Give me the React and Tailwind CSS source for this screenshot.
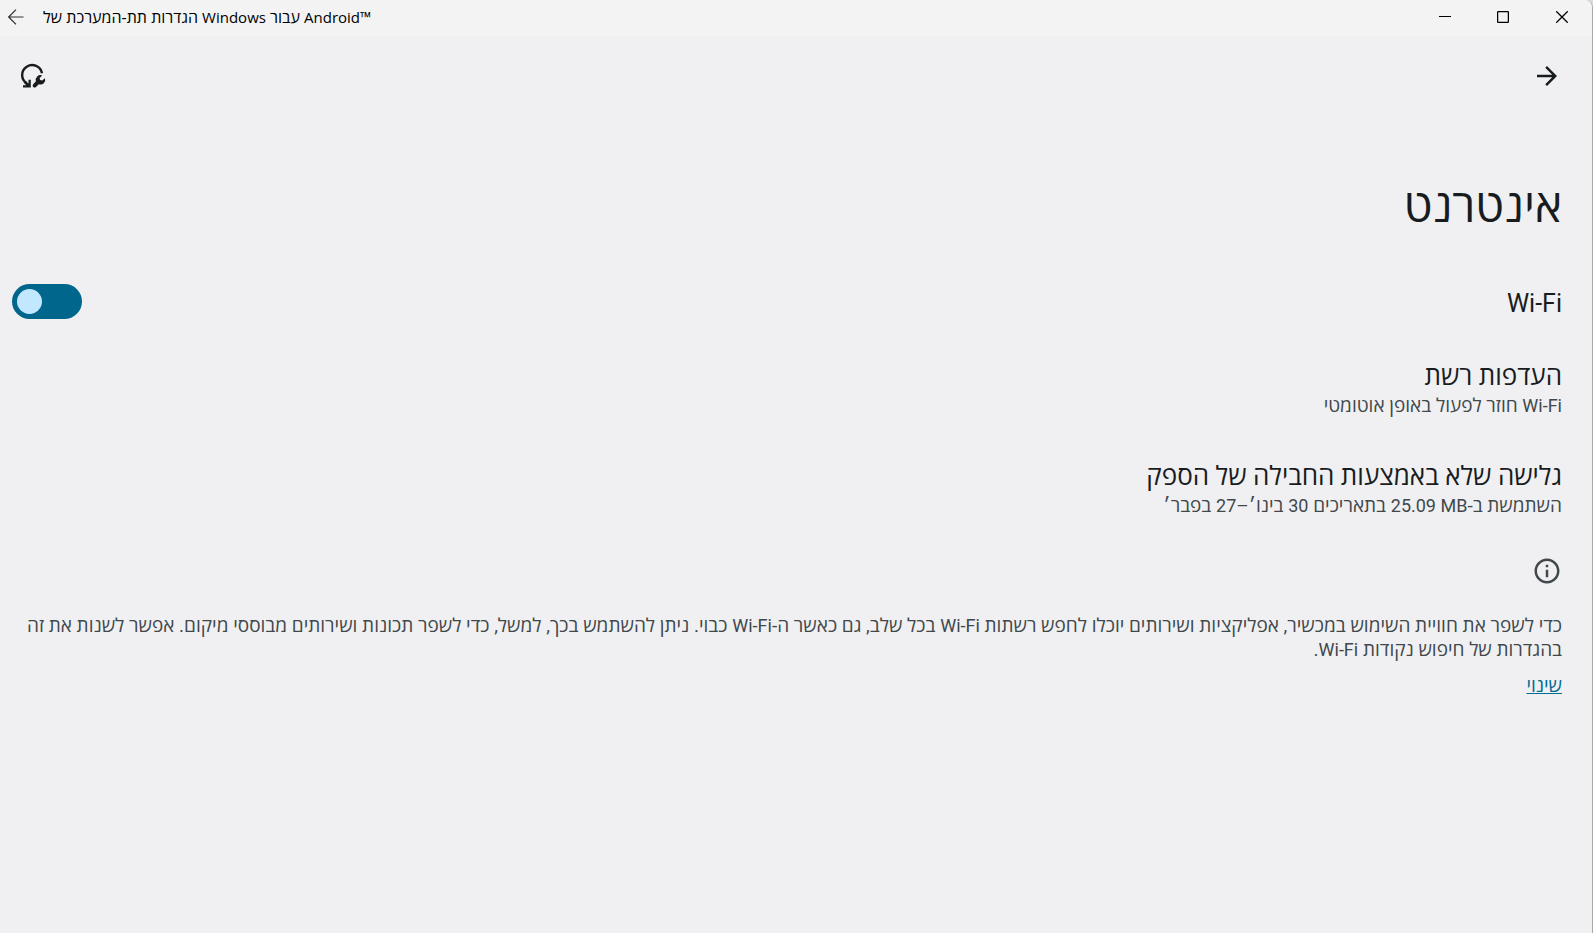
import { useState } from 'react'

const MinimizeIcon = () => (
    <svg width="12" height="12" viewBox="0 0 12 12" fill="none" stroke="currentColor">
        <path d="M0 5.5h12" />
    </svg>
);

const MaximizeIcon = () => (
    <svg width="12" height="12" viewBox="0 0 12 12" fill="none" stroke="currentColor" strokeWidth="1.3">
        <rect x="0.6" y="0.6" width="10.800" height="10.800" rx="1" />
    </svg>
);

const CloseIcon = () => (
    <svg width="12" height="12" viewBox="0 0 12 12" fill="none" stroke="currentColor" strokeWidth="1.3">
        <path d="M0.3 0.3l11.4 11.4M11.7 0.3L0.3 11.7" />
    </svg>
);

const ResetIcon = () => (
    <svg width="26" height="26" viewBox="0 0 26 26" fill="none">
        <path d="M22 10.300A10 10 0 1 0 6.500 20.300" stroke="currentColor" strokeWidth="2.4" />
        <path d="M10.800 16.800v7.700H3v-2.300h3.200L4.200 20.200 6 18.200l2.500 2.400v-3.800z" fill="currentColor" />
        <path d="M25 15.200a4.800 4.800 0 0 1-6.200 6l-2.800 2.700a1.900 1.900 0 0 1-2.800-2.700l2.700-2.900a4.800 4.800 0 0 1 6.300-5.900l-2.600 2.700.5 2 2 .5z" fill="currentColor" />
    </svg>
);

const InfoIcon = () => (
    <svg width="30" height="30" viewBox="0 0 24 24" fill="currentColor">
        <path d="M11 7h2v2h-2zm0 4h2v6h-2zm1-9C6.480 2 2 6.480 2 12s4.480 10 10 10 10-4.480 10-10S17.520 2 12 2zm0 18c-4.410 0-8-3.590-8-8s3.590-8 8-8 8 3.590 8 8-3.590 8-8 8z" />
    </svg>
);

// latin words sit a little smaller than the hebrew around them
const Latin = ({ children }) => <span className="text-[18px]">{children}</span>

const TitleBar = () => {
    return (
        <header dir="ltr" className="flex h-9 items-center bg-[#f3f3f3] pb-0.5 text-black">
            <button type="button" aria-label="חזרה" className="ml-2 flex text-[#333]">
                <svg width="16" height="16" viewBox="0 0 16 16" fill="none" stroke="currentColor" strokeWidth="1.2">
                    <path d="M15.500 8H0.800M8 0.700L0.700 8 8 15.300" />
                </svg>
            </button>
            <h1 className="ml-[19px] flex-1 font-['Open_Sans',sans-serif] text-[16px] leading-5">
                הגדרות תת-המערכת של <span className="text-[15px]">Windows</span> עבור <span className="text-[15px]">Android™</span>
            </h1>
            <div className="flex h-full">
                <button type="button" aria-label="מזעור" className="flex w-[58px] items-center justify-center"><MinimizeIcon /></button>
                <button type="button" aria-label="הגדלה" className="flex w-[58px] items-center justify-center"><MaximizeIcon /></button>
                <button type="button" aria-label="סגירה" className="flex w-[60px] items-center justify-center"><CloseIcon /></button>
            </div>
        </header>
    )
}

const Preference = ({ title, summary }) => {
    return (
        <button type="button" className="block w-full text-start">
            <span className="block text-[26px] leading-8">{title}</span>
            <span className="block text-[19px] leading-7 text-[#40484c]">{summary}</span>
        </button>
    )
}

const App = () => {
    const [wifi, setWifi] = useState(true);

    return (
        <div className="min-h-screen bg-[#dcdcdc]">
            <div dir="rtl" lang="he" className="min-h-screen overflow-hidden rounded-tr-lg border-r border-[#a8a8a8] bg-[#f0f0f2] font-[Roboto,'Open_Sans',sans-serif] text-[#191c1e]">
                <TitleBar />

                {/* toolbar */}
                <div className="flex h-20 items-center justify-between pr-[30px] pl-5">
                    <button type="button" aria-label="הקודם" className="flex">
                        <svg width="30" height="30" viewBox="0 0 24 24" fill="currentColor">
                            <path d="M12 4l-1.410 1.410L16.170 11H4v2h12.170l-5.580 5.590L12 20l8-8z" />
                        </svg>
                    </button>
                    <button type="button" aria-label="איפוס" className="flex"><ResetIcon /></button>
                </div>

                <main className="pr-[30px] pl-3">
                    <h2 className="mt-15 text-[46px] leading-[60px]">אינטרנט</h2>

                    <label className="mt-12 flex items-start justify-between">
                        <span className="pt-1 text-[25px] leading-8">Wi-Fi</span>
                        <input
                            type="checkbox"
                            role="switch"
                            checked={wifi}
                            onChange={(e) => setWifi(e.target.checked)}
                            className="flex h-[35px] w-[70px] appearance-none items-center rounded-full bg-[#7a8286] px-[5px] before:size-[25px] before:rounded-full before:bg-[#c2e8ff] checked:justify-end checked:bg-[#00668b]"
                        />
                    </label>

                    <div className="mt-10">
                        <Preference title="העדפות רשת" summary={<><Latin>Wi-Fi</Latin> חוזר לפעול באופן אוטומטי</>} />
                    </div>
                    <div className="mt-10">
                        <Preference
                            title="גלישה שלא באמצעות החבילה של הספק"
                            summary={<>השתמשת ב-<bdi><Latin>25.09 MB</Latin></bdi> בתאריכים <Latin>30</Latin> בינו׳–<Latin>27</Latin> בפבר׳</>}
                        />
                    </div>

                    <div className="mt-9 text-[#40484c]">
                        <InfoIcon />
                        <p className="mt-7 text-[19px] leading-6">
                            כדי לשפר את חוויית השימוש במכשיר, אפליקציות ושירותים יוכלו לחפש רשתות <Latin>Wi-Fi</Latin> בכל שלב, גם כאשר ה-<Latin>Wi-Fi</Latin> כבוי. ניתן להשתמש בכך, למשל, כדי לשפר תכונות ושירותים מבוססי מיקום. אפשר לשנות את זה בהגדרות של חיפוש נקודות <Latin>Wi-Fi</Latin>.
                        </p>
                        <a href="#scanning" className="mt-3 inline-block text-[19px] leading-6 text-[#006c93] underline">שינוי</a>
                    </div>
                </main>
            </div>
        </div>
    )
}

export default App
